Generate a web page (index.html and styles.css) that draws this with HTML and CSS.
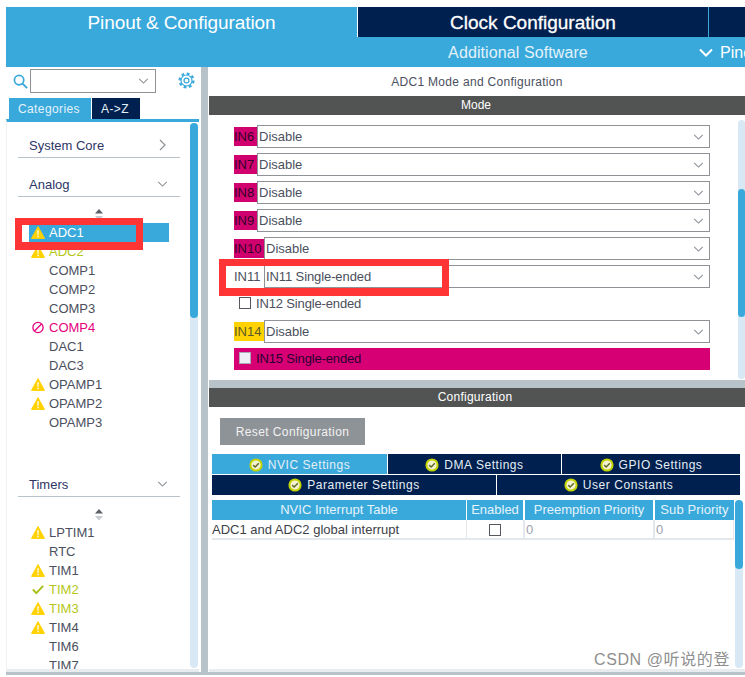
FILE: index.html
```html
<!DOCTYPE html>
<html lang="en">
<head>
<meta charset="utf-8">
<title>ADC1 Mode and Configuration</title>
<link rel="stylesheet" href="styles.css">
</head>
<body>
<svg class="defs" width="0" height="0" aria-hidden="true">
  <defs>
    <symbol id="warn" viewBox="0 0 14 13"><path d="M7 .6 13.500 12.400H.5Z" fill="#ffd200" stroke="#ffd200" stroke-linejoin="round"/><path d="M6.300 4.200h1.400l-.2 4.700h-1zM6.300 9.800h1.400v1.500H6.300z" fill="#fff"/></symbol>
    <symbol id="chev" viewBox="0 0 12 7"><path d="M1 1 6 6 11 1" fill="none" stroke="#8c9196" stroke-width="1.2"/></symbol>
    <symbol id="ok" viewBox="0 0 14 14"><circle cx="7" cy="7" r="5.600" fill="#f5f2d0" stroke="#c3d200" stroke-width="2"/><path d="M4.200 7.100 6.200 9 9.800 5.200" fill="none" stroke="#5f6a2a" stroke-width="1.500"/></symbol>
    <symbol id="sort" viewBox="0 0 10 12"><path d="M5 0 9 4.500H1Z" fill="#5b6068"/><path d="M5 11.500 9 7H1Z" fill="#c6cbd0"/></symbol>
  </defs>
</svg>
<div class="app">
  <header class="head">
    <div class="tab-main">Pinout &amp; Configuration</div>
    <div class="head-right">
      <div class="head-top">
        <div class="tab-clock">Clock Configuration</div>
        <div class="tab-tools"></div>
      </div>
      <div class="head-sub">
        <div class="tab-soft">Additional Software</div>
        <svg class="pin-chev" viewBox="0 0 14 9"><path d="M1 1.500 7 7.500 13 1.500" fill="none" stroke="#fff" stroke-width="2"/></svg>
        <div class="tab-pin">Pinout view</div>
      </div>
    </div>
  </header>
  <main class="body">
    <aside class="left">
      <div class="search">
        <svg class="mag" viewBox="0 0 16 16"><circle cx="6.500" cy="6.500" r="5" fill="none" stroke="#39a9dc" stroke-width="1.800"/><path d="M10.200 10.200 15 15" stroke="#39a9dc" stroke-width="2"/></svg>
        <div class="search-box"><svg class="chev"><use href="#chev"/></svg></div>
        <svg class="gear" viewBox="0 0 18 18"><circle cx="9" cy="9" r="7.300" fill="none" stroke="#39a9dc" stroke-width="2.400" stroke-dasharray="3 2.730"/><circle cx="9" cy="9" r="5.800" fill="#fff" stroke="#39a9dc" stroke-width="1.200"/><circle cx="9" cy="9" r="2.600" fill="none" stroke="#39a9dc" stroke-width="1.300"/></svg>
      </div>
      <div class="cat-tabs"><div class="cat-on">Categories</div><div class="cat-off">A-&gt;Z</div></div>
      <div class="tree">
        <div class="tree-main">
          <div class="group first"><span>System Core</span><svg class="side" viewBox="0 0 7 12"><path d="M1 1 6 6 1 11" fill="none" stroke="#8c9196" stroke-width="1.200"/></svg></div>
          <div class="group"><span>Analog</span><svg class="chev"><use href="#chev"/></svg></div>
          <svg class="sort"><use href="#sort"/></svg>
          <ul class="items">
            <li class="sel"><svg class="ic"><use href="#warn"/></svg>ADC1</li>
            <li class="lime"><svg class="ic"><use href="#warn"/></svg>ADC2</li>
            <li>COMP1</li>
            <li>COMP2</li>
            <li>COMP3</li>
            <li class="pink"><svg class="ic" viewBox="0 0 14 14"><circle cx="7" cy="7" r="5.500" fill="none" stroke="#e6007e" stroke-width="1.400"/><path d="M3.200 10.800 10.800 3.200" stroke="#e6007e" stroke-width="1.400"/></svg>COMP4</li>
            <li>DAC1</li>
            <li>DAC3</li>
            <li><svg class="ic"><use href="#warn"/></svg>OPAMP1</li>
            <li><svg class="ic"><use href="#warn"/></svg>OPAMP2</li>
            <li>OPAMP3</li>
          </ul>
          <div class="group timers"><span>Timers</span><svg class="chev"><use href="#chev"/></svg></div>
          <svg class="sort"><use href="#sort"/></svg>
          <ul class="items">
            <li><svg class="ic"><use href="#warn"/></svg>LPTIM1</li>
            <li>RTC</li>
            <li><svg class="ic"><use href="#warn"/></svg>TIM1</li>
            <li class="lime"><svg class="ic" viewBox="0 0 14 14"><path d="M1.500 7 5.200 11 12.500 3.200" fill="none" stroke="#a8bf12" stroke-width="2"/></svg>TIM2</li>
            <li class="lime"><svg class="ic"><use href="#warn"/></svg>TIM3</li>
            <li><svg class="ic"><use href="#warn"/></svg>TIM4</li>
            <li>TIM6</li>
            <li>TIM7</li>
          </ul>
        </div>
        <div class="track tree-track"><div class="thumb tree-thumb"></div></div>
      </div>
    </aside>
    <div class="split"></div>
    <section class="right">
      <h1 class="title">ADC1 Mode and Configuration</h1>
      <div class="bar">Mode</div>
      <div class="mode">
        <div class="form">
          <div class="row"><span class="pin bad">IN6</span><div class="select">Disable<svg class="chev"><use href="#chev"/></svg></div></div>
          <div class="row"><span class="pin bad">IN7</span><div class="select">Disable<svg class="chev"><use href="#chev"/></svg></div></div>
          <div class="row"><span class="pin bad">IN8</span><div class="select">Disable<svg class="chev"><use href="#chev"/></svg></div></div>
          <div class="row"><span class="pin bad">IN9</span><div class="select">Disable<svg class="chev"><use href="#chev"/></svg></div></div>
          <div class="row"><span class="pin wide bad">IN10</span><div class="select">Disable<svg class="chev"><use href="#chev"/></svg></div></div>
          <div class="row"><span class="pin wide">IN11</span><div class="select tight">IN11 Single-ended<svg class="chev"><use href="#chev"/></svg></div></div>
          <div class="check-row"><span class="box"></span>IN12 Single-ended</div>
          <div class="row"><span class="pin wide warn">IN14</span><div class="select">Disable<svg class="chev"><use href="#chev"/></svg></div></div>
          <div class="check-row bad-row"><span class="box off"></span>IN15 Single-ended</div>
        </div>
        <div class="track mode-track"><div class="thumb mode-thumb"></div></div>
      </div>
      <div class="rule"></div>
      <div class="bar wide-bar">Configuration</div>
      <div class="config">
        <div class="config-main">
          <button class="reset" type="button">Reset Configuration</button>
          <div class="set-tabs three">
            <div class="set-tab on"><svg class="ok"><use href="#ok"/></svg>NVIC Settings</div>
            <div class="set-tab"><svg class="ok"><use href="#ok"/></svg>DMA Settings</div>
            <div class="set-tab end"><svg class="ok"><use href="#ok"/></svg>GPIO Settings</div>
          </div>
          <div class="set-tabs two">
            <div class="set-tab"><svg class="ok"><use href="#ok"/></svg>Parameter Settings</div>
            <div class="set-tab end"><svg class="ok"><use href="#ok"/></svg>User Constants</div>
          </div>
          <div class="table">
            <div class="th one">NVIC Interrupt Table</div>
            <div class="th">Enabled</div>
            <div class="th">Preemption Priority</div>
            <div class="th end">Sub Priority</div>
            <div class="td one name">ADC1 and ADC2 global interrupt</div>
            <div class="td mid"><span class="box"></span></div>
            <div class="td num">0</div>
            <div class="td num end">0</div>
          </div>
        </div>
        <div class="track cfg-track"><div class="thumb cfg-thumb"></div></div>
      </div>
      <div class="right-foot"></div>
    </section>
  </main>
  <div class="bottom"></div>
</div>
<div class="mark m-adc"></div>
<div class="mark m-in"></div>
<div class="watermark">CSDN @听说的登</div>
</body>
</html>
```
FILE: styles.css
```css
* { box-sizing: border-box; }
html, body { margin: 0; padding: 0; height: 100%; overflow: hidden; background: #fff; }
body { position: relative; font-family: "Liberation Sans", Arial, sans-serif; font-size: 13px; color: #4b4f5e; }
.defs { position: absolute; }
.app { padding: 7px 0 0 6px; width: 745px; height: 677px; display: flex; flex-direction: column; }

.head { display: flex; height: 60px; flex: none; background: #39a9dc; }
.tab-main { width: 351px; height: 30px; line-height: 31px; text-align: center; font-size: 19px; letter-spacing: -.1px; color: #fff; flex: none; }
.head-right { width: 388px; flex: none; overflow: hidden; background: #39a9dc; }
.head-top { display: flex; height: 30px; border-left: 1px solid #fff; }
.tab-clock { width: 350px; background: #00204f; color: #fff; text-align: center; line-height: 31px; font-size: 19px; -webkit-text-stroke: .3px #fff; flex: none; }
.tab-tools { flex: 1; margin-left: 1px; background: #00204f; }
.head-sub { display: flex; align-items: center; height: 30px; padding: 1px 0 0 1px; white-space: nowrap; color: #e3f2fa; font-size: 16px; }
.tab-soft { width: 320px; text-align: center; flex: none; letter-spacing: .1px; }
.pin-chev { width: 14px; height: 9px; margin-left: 21px; flex: none; }
.tab-pin { margin-left: 7px; color: #fff; }

.body { display: flex; height: 605px; flex: none; }
.left { width: 195px; flex: none; display: flex; flex-direction: column; }
.search { display: flex; align-items: center; height: 31px; padding: 0 0 3px 7px; flex: none; }
.mag { width: 15px; height: 15px; margin-right: 2px; flex: none; }
.search-box { width: 126px; height: 24px; border: 1px solid #8f9398; display: flex; align-items: center; justify-content: flex-end; padding-right: 6px; flex: none; }
.gear { width: 17px; height: 17px; margin: 0 0 2px 22px; flex: none; }
.chev { width: 11px; height: 6px; flex: none; }

.cat-tabs { display: flex; padding-left: 3px; height: 21px; flex: none; color: #e3f2fa; font-size: 12px; letter-spacing: .4px; }
.cat-on { width: 82px; padding-right: 2px; background: #39a9dc; text-align: center; line-height: 22px; }
.cat-off { width: 48px; padding-right: 2px; margin-left: 1px; background: #00204f; text-align: center; line-height: 22px; }

.tree { display: flex; height: 553px; flex: none; overflow: hidden; border-top: 3px solid #39a9dc; border-left: 1px solid #eef0f2; border-bottom: 3px solid #e8ecef; margin-right: 2px; }
.tree-main { width: 183px; flex: none; padding: 0 0 0 11px; }
.group { width: 162px; height: 39px; border-bottom: 1px solid #b7c2c9; display: flex; justify-content: space-between; align-items: center; padding: 14px 12px 0 11px; color: #2d3566; font-size: 13px; }
.group.first { height: 36px; padding-top: 11px; }
.group.timers { margin-top: 26px; }
.side { width: 7px; height: 12px; margin-right: 2px; }
.sort { display: block; width: 10px; height: 12px; margin: 12px 0 0 76px; }
.items { list-style: none; margin: 2px 0 0; padding: 0; }
.items li { display: flex; align-items: center; height: 19px; padding-left: 42px; position: relative; white-space: nowrap; margin-left: -11px; margin-right: 11px; }
.items .sel { background: #39a9dc; color: #fff; margin-left: 11px; padding-left: 20px; width: 140px; margin-right: 0; }
.ic { position: absolute; left: 24px; top: 3px; width: 14px; height: 13px; }
.sel .ic { left: 2px; }
.lime { color: #b5c81a; }
.pink { color: #e6007e; }
.track { background: #d9e8f5; border-radius: 4px; flex: none; }
.thumb { background: #39a9dc; border-radius: 4px; }
.tree-track { width: 8px; height: 545px; margin-top: 1px; }
.tree-thumb { height: 195px; }

.split { width: 7px; flex: none; background: #b8c3c9; height: 605px; }
.right { width: 536px; margin-left: 1px; flex: none; display: flex; flex-direction: column; }
.title { margin: 0; height: 29px; line-height: 31px; font-size: 12px; font-weight: normal; text-align: center; color: #4b4f5e; flex: none; letter-spacing: .3px; }
.bar { height: 19px; line-height: 19px; text-align: center; background: #525453; color: #fff; font-size: 12px; flex: none; padding-right: 2px; }
.wide-bar { letter-spacing: .25px; padding-right: 4px; }

.mode { display: flex; height: 265px; flex: none; }
.form { width: 529px; padding: 10px 0 0 25px; flex: none; display: flex; flex-direction: column; gap: 5px; }
.row { width: 476px; height: 23px; display: flex; align-items: center; }
.pin { width: 23px; height: 19px; line-height: 19px; font-size: 13px; flex: none; }
.pin.wide { width: 30px; }
.pin.bad { background: #d0006f; color: #35002a; }
.pin.warn { background: #ffd200; color: #5b5a2c; }
.select { flex: 1; height: 23px; border: 1px solid #8f9398; display: flex; align-items: center; justify-content: space-between; padding: 0 5px 0 1px; background: #fff; }
.tight { letter-spacing: -.1px; }
.check-row { width: 476px; height: 22px; display: flex; align-items: center; padding: 0 0 2px 5px; gap: 5px; letter-spacing: -.15px; }
.bad-row { background: #d60074; color: #2a0030; }
.box { display: inline-block; width: 12px; height: 12px; border: 1px solid #55585e; background: #fff; flex: none; }
.box.off { background: #eff0f5; border-color: #a9a9b5; }
.mode-track { width: 7px; height: 259px; margin-top: 5px; padding-top: 69px; }
.mode-thumb { height: 128px; }

.rule { height: 8px; background: #b8c3c9; flex: none; }
.config { display: flex; height: 262px; flex: none; }
.config-main { width: 526px; padding: 11px 0 0 3px; flex: none; }
.reset { display: block; width: 145px; height: 27px; margin: 0 0 9px 8px; padding: 0; border: 0; background: #8e9398; color: #f2f2f2; font: 12px "Liberation Sans", Arial, sans-serif; letter-spacing: .4px; }
.set-tabs { display: grid; width: 528px; height: 21px; color: #e6eef5; font-size: 12px; letter-spacing: .55px; }
.set-tabs.three { grid-template-columns: 176px 174px 178px; }
.set-tabs.two { grid-template-columns: 285px 243px; height: 20px; }
.set-tab { background: #00204f; border-right: 1px solid #fff; border-bottom: 1px solid #fff; display: flex; align-items: center; justify-content: center; gap: 5px; padding-top: 1px; }
.set-tabs.two .set-tab { border-bottom: 0; padding-top: 0; }
.set-tab.on { background: #39a9dc; border-bottom-color: #fff; }
.set-tab.end { border-right: 0; }
.ok { width: 14px; height: 14px; flex: none; }
.table { display: grid; grid-template-columns: 255px 58px 130px 79px; margin-top: 5px; width: 522px; }
.th { height: 20px; line-height: 19px; text-align: center; background: #39a9dc; color: #e6f3fa; font-size: 13px; border-right: 2px solid #fff; white-space: nowrap; }
.th.one { border-right-width: 1px; }
.th.end { border-right: 0; letter-spacing: .1px; }
.td { height: 20px; border-bottom: 2px solid #e3e8ec; border-right: 2px solid #e3e8ec; display: flex; align-items: center; font-size: 13px; padding-top: 1px; white-space: nowrap; }
.td.one { border-right-width: 1px; }
.td.end { border-right-width: 1px; }
.name { color: #3d3f48; }
.mid { justify-content: center; }
.num { color: #9aa3ad; padding-left: 1px; }
.cfg-track { width: 8px; height: 168px; margin-top: 93px; }
.cfg-thumb { height: 69px; }
.right-foot { height: 3px; background: #e8ecef; flex: none; }

.bottom { height: 3px; background: #b8c3c9; flex: none; }

.mark { position: absolute; border: 7px solid #ff3535; border-bottom-width: 8px; }
.m-adc { left: 15px; top: 218px; width: 128px; height: 32px; }
.m-in { left: 219px; top: 259px; width: 230px; height: 37px; }
.watermark { position: absolute; left: 594px; top: 646px; font: 16px "Liberation Sans", "Noto Sans CJK SC", sans-serif; letter-spacing: .6px; color: #8f8f8f; white-space: nowrap; }
```
